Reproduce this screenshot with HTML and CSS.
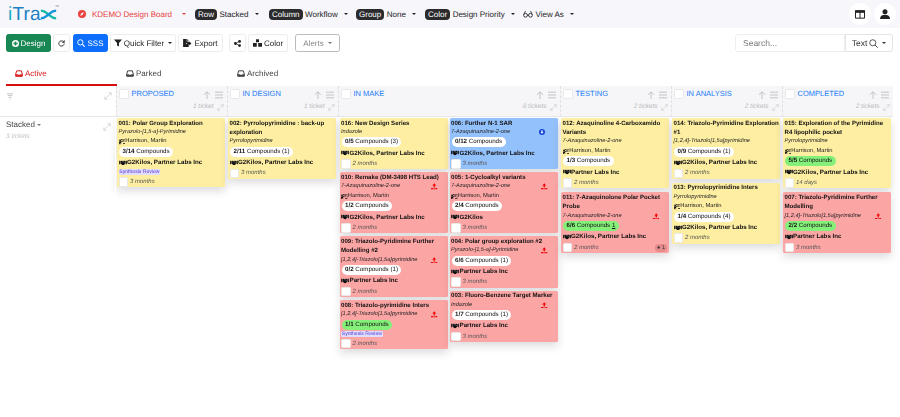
FILE: index.html
```html
<!DOCTYPE html>
<html lang="en">
<head>
<meta charset="utf-8">
<title>iTrax Design Board</title>
<link rel="stylesheet" href="styles.css">
</head>
<body>
<svg class="defs" width="0" height="0" aria-hidden="true">
  <symbol id="board" viewBox="0 0 12 10"><path fill="currentColor" d="M3.500 0H12v8.500H7.500v-1H11V1H4.500v1h-1zM2 1a1.600 1.600 0 1 1 0 3.200A1.600 1.600 0 0 1 2 1zM0 5.500c0-.6.4-1 1-1h2.500l2-1.200.6.9-2.100 1.600V10H3V7.500H2V10H.5zM6 2.500h4v1H6zM6 4.500h4v1H6z"/></symbol>
  <symbol id="hands" viewBox="0 0 14 10"><path fill="currentColor" d="M0 1.500h1.800v6H0zM12.200 1.500H14v6h-1.800zM2.400 2 5 1.200 7 1.900 9 1.200 11.600 2v4.500L8 9.500H6.200L2.400 6.500z"/><path fill="none" stroke="#fff" stroke-opacity=".6" stroke-width=".8" d="M4.500 4 7 2.500l4 3.500"/></symbol>
  <symbol id="up" viewBox="0 0 10 10"><path fill="currentColor" d="M5 .5 8 4H6v3H4V4H2zM0 7.500h3V8.500h4V7.500h3V10H0z"/></symbol>
  <symbol id="tray" viewBox="0 0 12 10"><path fill="none" stroke="currentColor" stroke-width="1.500" d="M1 6 2.500 1h7L11 6v3H1z"/><path fill="currentColor" d="M1 6h3l1 1h2l1-1h3v3.500H1z"/></symbol>
  <symbol id="expand" viewBox="0 0 10 10"><path fill="none" stroke="currentColor" stroke-width=".9" d="M1 9 9 1M5.500 1H9v3.500M1 5.500V9h3.500"/></symbol>
  <symbol id="arrow" viewBox="0 0 10 10"><path fill="none" stroke="currentColor" stroke-width="1.100" d="M5 10V1M1.200 4.800 5 1l3.800 3.800"/></symbol>
  <symbol id="menu" viewBox="0 0 10 10"><path fill="none" stroke="currentColor" stroke-width="1.100" d="M0 1.500h10M0 5h10M0 8.500h10"/></symbol>
</svg>

<header class="topbar">
  <div class="logo"><span class="logo-text"><span class="logo-i">i</span>Tra</span><svg class="logo-x" viewBox="0 0 20 14" width="17" height="13"><path fill="none" stroke="#16b8a6" stroke-width="2.800" d="M1 2.500c5 0 7 3 9 4.500 2 1.500 4 4.500 9 4.500"/><path fill="none" stroke="#1593d8" stroke-width="2.800" d="M1 11.500c5 0 7-3 9-4.500 2-1.500 4-4.500 9-4.500"/></svg><span class="logo-tm">&#8482;</span></div>
  <nav class="menu">
    <span class="mi board-name"><svg class="compass" viewBox="0 0 10 10" width="8" height="8"><circle cx="5" cy="5" r="5" fill="#e8413e"/><path fill="#fff" d="M7.500 2.500 5.800 5.800 2.500 7.500 4.200 4.200z"/></svg>KDEMO Design Board<i class="caret"></i></span>
    <span class="mi mi-row"><b class="pill">Row</b>Stacked<i class="caret"></i></span>
    <span class="mi mi-col"><b class="pill">Column</b>Workflow<i class="caret"></i></span>
    <span class="mi mi-grp"><b class="pill">Group</b>None<i class="caret"></i></span>
    <span class="mi mi-clr"><b class="pill">Color</b>Design Priority<i class="caret"></i></span>
    <span class="mi mi-view"><svg viewBox="0 0 12 9" width="10" height="8"><path fill="none" stroke="#222" stroke-width="1" d="M3 1 1 5M9 1l2 4M5 6h2"/><circle cx="3" cy="6" r="2.300" fill="none" stroke="#222"/><circle cx="9" cy="6" r="2.300" fill="none" stroke="#222"/></svg>View As<i class="caret"></i></span>
  </nav>
  <div class="round-group">
    <span class="round"><svg viewBox="0 0 12 10" width="10" height="9"><path fill="none" stroke="#222" stroke-width="1.200" d="M.6.600h10.800v8.800H.6zM6 .6v8.800"/><path fill="#222" d="M0 0h12v3H0z"/></svg></span>
    <span class="round"><svg viewBox="0 0 12 12" width="10" height="10"><circle cx="6" cy="3.200" r="3" fill="#222"/><path fill="#222" d="M0 12c0-3.500 2.500-5 6-5s6 1.500 6 5z"/></svg></span>
  </div>
</header>

<section class="toolbar">
  <button class="btn btn-green"><svg viewBox="0 0 10 10" width="7" height="7"><circle cx="5" cy="5" r="5" fill="#fff"/><path fill="#198754" d="M4 2h2v2h2v2H6v2H4V6H2V4h2z"/></svg>Design</button>
  <button class="btn btn-refresh"><svg viewBox="0 0 10 10" width="7" height="7"><path fill="none" stroke="#222" stroke-width="1.200" d="M8.800 5a3.800 3.800 0 1 1-1.200-2.800"/><path fill="#222" d="M9.500 0v4h-4z"/></svg></button>
  <button class="btn btn-blue"><svg viewBox="0 0 10 10" width="8" height="8"><circle cx="4.200" cy="4.200" r="3.300" fill="none" stroke="#fff" stroke-width="1.200"/><path stroke="#fff" stroke-width="1.300" d="m6.700 6.700 3 3"/></svg>SSS</button>
  <button class="btn btn-qf"><svg viewBox="0 0 10 10" width="8" height="8"><path fill="#222" d="M0 .5h10L6.200 5v4.500L3.800 8V5z"/></svg>Quick Filter<i class="caret small"></i></button>
  <button class="btn btn-exp"><svg viewBox="0 0 11 10" width="9" height="8"><path fill="#222" d="M0 0h4.500v3H7v2H3.500v1H7v4H0zM5 0l2 2.200H5zM7.500 4V2.800L10.500 5.500 7.500 8.200V6.500H5V4z"/></svg>Export</button>
  <button class="btn btn-share"><svg viewBox="0 0 10 10" width="7" height="7"><circle cx="2" cy="5" r="2" fill="#222"/><circle cx="8" cy="2" r="2" fill="#222"/><circle cx="8" cy="8" r="2" fill="#222"/><path stroke="#222" d="M2 5l6-3M2 5l6 3"/></svg></button>
  <button class="btn btn-color"><svg viewBox="0 0 12 10" width="9" height="8"><path fill="#222" d="M4 0h4v4H4zM0 5h5v5H0zM7 5h5v5H7z"/></svg>Color</button>
  <button class="btn btn-alerts">Alerts<i class="caret small grey"></i></button>
  <div class="searchbox">
    <span class="search-input">Search...</span>
    <span class="search-type">Text<svg viewBox="0 0 10 10" width="9" height="9"><circle cx="4.200" cy="4.200" r="3.400" fill="none" stroke="#333" stroke-width=".9"/><path stroke="#333" stroke-width="1" d="m6.700 6.700 3 3"/></svg><i class="caret small"></i></span>
  </div>
</section>

<nav class="tabs">
  <span class="tab active"><svg class="tab-ico"><use href="#tray"/></svg>Active</span>
  <span class="tab"><svg class="tab-ico"><use href="#tray"/></svg>Parked</span>
  <span class="tab"><svg class="tab-ico"><use href="#tray"/></svg>Archived</span>
</nav>

<main class="board">
  <div class="corner">
    <svg class="sort-ico" viewBox="0 0 8 8" width="7" height="7"><path stroke="#bbb" d="M0 1h7M1 3h5M2 5h3M3 7h1"/></svg>
    <svg class="exp-ico big"><use href="#expand"/></svg>
  </div>
  <div class="col-head"><i class="box"></i><span class="col-title">PROPOSED</span><span class="col-tools"><svg class="tool"><use href="#arrow"/></svg><svg class="tool"><use href="#menu"/></svg></span><span class="col-count">1 ticket<svg class="exp-ico"><use href="#expand"/></svg></span></div>
  <div class="col-head"><i class="box"></i><span class="col-title">IN DESIGN</span><span class="col-tools"><svg class="tool"><use href="#arrow"/></svg><svg class="tool"><use href="#menu"/></svg></span><span class="col-count">1 ticket<svg class="exp-ico"><use href="#expand"/></svg></span></div>
  <div class="col-head"><i class="box"></i><span class="col-title">IN MAKE</span><span class="col-tools"><svg class="tool"><use href="#arrow"/></svg><svg class="tool"><use href="#menu"/></svg></span><span class="col-count">8 tickets<svg class="exp-ico"><use href="#expand"/></svg></span></div>
  <div class="col-head"><i class="box"></i><span class="col-title">TESTING</span><span class="col-tools"><svg class="tool"><use href="#arrow"/></svg><svg class="tool"><use href="#menu"/></svg></span><span class="col-count">2 tickets<svg class="exp-ico"><use href="#expand"/></svg></span></div>
  <div class="col-head"><i class="box"></i><span class="col-title">IN ANALYSIS</span><span class="col-tools"><svg class="tool"><use href="#arrow"/></svg><svg class="tool"><use href="#menu"/></svg></span><span class="col-count">2 tickets<svg class="exp-ico"><use href="#expand"/></svg></span></div>
  <div class="col-head"><i class="box"></i><span class="col-title">COMPLETED</span><span class="col-tools"><svg class="tool"><use href="#arrow"/></svg><svg class="tool"><use href="#menu"/></svg></span><span class="col-count">2 tickets<svg class="exp-ico"><use href="#expand"/></svg></span></div>

  <div class="row-head">
    <span class="row-name">Stacked<i class="caret small grey"></i></span>
    <span class="row-count">3 tickets</span>
    <svg class="exp-ico big"><use href="#expand"/></svg>
  </div>

  <div class="lane">
    <article class="card yellow">
      <h3>001: Polar Group Exploration</h3>
      <p class="chem">Pyrazolo-[1,5-a]-Pyrimidine</p>
      <p class="owner"><svg class="ic"><use href="#board"/></svg>Harrison, Martin</p>
      <p class="cmp"><span class="cpill">3/14 <em>Compounds</em></span></p>
      <p class="org"><svg class="ic hs"><use href="#hands"/></svg>G2Kilos, Partner Labs Inc</p>
      <p class="tagline"><span class="tag">Synthesis Review</span></p>
      <p class="foot"><i class="box sm"></i>3 months</p>
    </article>
  </div>

  <div class="lane">
    <article class="card yellow">
      <h3>002: Pyrrolopyrimidine : back-up exploration</h3>
      <p class="chem">Pyrrolopyrimidine</p>
      <p class="cmp"><span class="cpill">2/11 <em>Compounds (1)</em></span></p>
      <p class="org"><svg class="ic hs"><use href="#hands"/></svg>G2Kilos, Partner Labs Inc</p>
      <p class="foot"><i class="box sm"></i>3 months</p>
    </article>
  </div>

  <div class="lane double">
    <div class="sub">
      <article class="card yellow">
        <h3>016: New Design Series</h3>
        <p class="chem">Indazole</p>
        <p class="cmp"><span class="cpill">0/5 <em>Compounds (3)</em></span></p>
        <p class="org"><svg class="ic hs"><use href="#hands"/></svg>G2Kilos, Partner Labs Inc</p>
        <p class="foot"><i class="box sm"></i>2 months</p>
      </article>
      <article class="card red">
        <h3>010: Remake (DM-3498 HTS Lead)</h3>
        <p class="chem">7-Azaquinazoline-2-one<svg class="flag"><use href="#up"/></svg></p>
        <p class="owner"><svg class="ic"><use href="#board"/></svg>Harrison, Martin</p>
        <p class="cmp"><span class="cpill">1/2 <em>Compounds</em></span></p>
        <p class="org"><svg class="ic hs"><use href="#hands"/></svg>G2Kilos, Partner Labs Inc</p>
        <p class="foot"><i class="box sm"></i>2 months</p>
      </article>
      <article class="card red">
        <h3>009: Triazolo-Pyridimine Further Modelling #2</h3>
        <p class="chem">[1,2,4]-Triazolo[1,5a]pyrimidine<svg class="flag"><use href="#up"/></svg></p>
        <p class="cmp"><span class="cpill">0/2 <em>Compounds (1)</em></span></p>
        <p class="org"><svg class="ic hs"><use href="#hands"/></svg>Partner Labs Inc</p>
        <p class="foot"><i class="box sm"></i>2 months</p>
      </article>
      <article class="card red">
        <h3>008: Triazolo-pyrimidine Inters</h3>
        <p class="chem">[1,2,4]-Triazolo[1,5a]pyrimidine<svg class="flag"><use href="#up"/></svg></p>
        <p class="cmp"><span class="cpill green">1/1 <em>Compounds</em></span></p>
        <p class="tagline"><span class="tag">Synthesis Review</span></p>
        <p class="foot"><i class="box sm"></i>2 months</p>
      </article>
    </div>
    <div class="sub">
      <article class="card blue">
        <h3>006: Further N-1 SAR</h3>
        <p class="chem">7-Azaquinazoline-2-one<svg class="flag info" viewBox="0 0 10 10"><circle cx="5" cy="5" r="5" fill="#1346d8"/><path fill="#fff" d="M4 2h2v3h1.500L5 8 2.500 5H4z"/></svg></p>
        <p class="cmp"><span class="cpill">0/12 <em>Compounds</em></span></p>
        <p class="org"><svg class="ic hs"><use href="#hands"/></svg>G2Kilos, Partner Labs Inc</p>
        <p class="foot"><i class="box sm"></i>3 months</p>
      </article>
      <article class="card red">
        <h3>005: 1-Cycloalkyl variants</h3>
        <p class="chem">7-Azaquinazoline-2-one<svg class="flag"><use href="#up"/></svg></p>
        <p class="owner"><svg class="ic"><use href="#board"/></svg>Harrison, Martin</p>
        <p class="cmp"><span class="cpill">2/4 <em>Compounds</em></span></p>
        <p class="org"><svg class="ic hs"><use href="#hands"/></svg>G2Kilos</p>
        <p class="foot"><i class="box sm"></i>3 months</p>
      </article>
      <article class="card red">
        <h3>004: Polar group exploration #2</h3>
        <p class="chem">Pyrazolo-[1,5-a]-Pyrimidine<svg class="flag"><use href="#up"/></svg></p>
        <p class="cmp"><span class="cpill">6/6 <em>Compounds (1)</em></span></p>
        <p class="org"><svg class="ic hs"><use href="#hands"/></svg>Partner Labs Inc</p>
        <p class="foot"><i class="box sm"></i>3 months</p>
      </article>
      <article class="card red">
        <h3>003: Fluoro-Benzene Target Marker</h3>
        <p class="chem">Indazole<svg class="flag"><use href="#up"/></svg></p>
        <p class="cmp"><span class="cpill">1/7 <em>Compounds (1)</em></span></p>
        <p class="org"><svg class="ic hs"><use href="#hands"/></svg>Partner Labs Inc</p>
        <p class="foot"><i class="box sm"></i>3 months</p>
      </article>
    </div>
  </div>

  <div class="lane">
    <article class="card yellow">
      <h3>012: Azaquinoline 4-Carboxamido Variants</h3>
      <p class="chem">7-Azaquinazoline-2-one</p>
      <p class="owner"><svg class="ic"><use href="#board"/></svg>Harrison, Martin</p>
      <p class="cmp"><span class="cpill">1/3 <em>Compounds</em></span></p>
      <p class="org"><svg class="ic hs"><use href="#hands"/></svg>Partner Labs Inc</p>
      <p class="foot"><i class="box sm"></i>2 months</p>
    </article>
    <article class="card red">
      <h3>011: 7-Azaquinolone Polar Pocket Probe</h3>
      <p class="chem">7-Azaquinazoline-2-one<svg class="flag"><use href="#up"/></svg></p>
      <p class="cmp"><span class="cpill green">6/6 <em>Compounds <u>1</u></em></span></p>
      <p class="org"><svg class="ic hs"><use href="#hands"/></svg>G2Kilos, Partner Labs Inc</p>
      <p class="foot"><i class="box sm"></i>2 months<span class="badge">&#9679; 1</span></p>
    </article>
  </div>

  <div class="lane">
    <article class="card yellow">
      <h3>014: Triazolo-Pyrimidine Exploration #1</h3>
      <p class="chem">[1,2,4]-Triazolo[1,5a]pyrimidine</p>
      <p class="cmp"><span class="cpill">0/9 <em>Compounds (1)</em></span></p>
      <p class="org"><svg class="ic hs"><use href="#hands"/></svg>G2Kilos, Partner Labs Inc</p>
      <p class="foot"><i class="box sm"></i>2 months</p>
    </article>
    <article class="card yellow">
      <h3>013: Pyrrolopyrimidine Inters</h3>
      <p class="chem">Pyrrolopyrimidine</p>
      <p class="owner"><svg class="ic"><use href="#board"/></svg>Harrison, Martin</p>
      <p class="cmp"><span class="cpill">1/4 <em>Compounds (4)</em></span></p>
      <p class="org"><svg class="ic hs"><use href="#hands"/></svg>G2Kilos, Partner Labs Inc</p>
      <p class="foot"><i class="box sm"></i>2 months</p>
    </article>
  </div>

  <div class="lane">
    <article class="card yellow">
      <h3>015: Exploration of the Pyrimidine R4 lipophilic pocket</h3>
      <p class="chem">Pyrrolopyrimidine</p>
      <p class="owner"><svg class="ic"><use href="#board"/></svg>Harrison, Martin</p>
      <p class="cmp"><span class="cpill green">5/5 <em>Compounds</em></span></p>
      <p class="org"><svg class="ic hs"><use href="#hands"/></svg>G2Kilos, Partner Labs Inc</p>
      <p class="foot"><i class="box sm"></i>14 days</p>
    </article>
    <article class="card red">
      <h3>007: Triazolo-Pyridimine Further Modelling</h3>
      <p class="chem">[1,2,4]-Triazolo[1,5a]pyrimidine<svg class="flag"><use href="#up"/></svg></p>
      <p class="cmp"><span class="cpill green">2/2 <em>Compounds</em></span></p>
      <p class="org"><svg class="ic hs"><use href="#hands"/></svg>Partner Labs Inc</p>
      <p class="foot"><i class="box sm"></i>3 months</p>
    </article>
  </div>
</main>
</body>
</html>
```

FILE: styles.css
```css
* { box-sizing: border-box; }
html, body { margin: 0; padding: 0; }
body {
  width: 900px;
  height: 417px;
  overflow: hidden;
  background: #fff;
  color: #222;
  font-family: "Liberation Sans", Arial, sans-serif;
  font-size: 8px;
  text-rendering: geometricPrecision;
  filter: blur(.25px);
}
.defs { display: block; height: 0; }
i { font-style: normal; }
p, h3 { margin: 0; }

/* top bar */
.topbar {
  height: 28px;
  background: #f6f6fb;
  display: flex;
  align-items: center;
  padding: 0 4px 0 8px;
}
.logo { position: relative; width: 70px; display: flex; align-items: center; }
.logo-text { font-size: 19px; color: #1d7fc4; line-height: 1; letter-spacing: .2px; }
.logo-i { color: #17a9c4; }
.logo-x { margin-left: -1px; margin-top: 1px; }
.logo-tm { position: absolute; left: 47px; top: -1px; font-size: 4px; line-height: 5px; color: #667; }
.menu { display: flex; align-items: center; flex: 1; }
.mi { display: flex; align-items: center; gap: 2.500px; white-space: nowrap; }
.board-name { color: #e8413e; gap: 6px; width: 117px; }
.mi-row { width: 74px; }
.mi-col { width: 87px; }
.mi-grp { width: 69px; }
.mi-clr { width: 98px; }
.pill {
  background: #2b2b2e;
  color: #fff;
  font-weight: 400;
  height: 11px;
  line-height: 11px;
  padding: 0 3px;
  border-radius: 4px;
}
.caret {
  width: 0; height: 0;
  margin-left: 4px;
  border-left: 2.200px solid transparent;
  border-right: 2.200px solid transparent;
  border-top: 2.500px solid currentColor;
}
.caret.small { margin-left: 2px; border-left-width: 2px; border-right-width: 2px; border-top-width: 2.200px; }
.caret.grey { color: #777; }
.round-group { display: flex; gap: 3px; }
.round {
  width: 22px; height: 22px;
  border-radius: 50%;
  background: #fff;
  display: flex; align-items: center; justify-content: center;
}

/* toolbar */
.toolbar {
  display: flex;
  align-items: flex-start;
  padding: 6px 7px 0 6px;
  height: 35px;
}
.btn {
  height: 18px;
  padding: 0;
  border: 1px solid #ececec;
  border-radius: 2.500px;
  background: #fff;
  color: #222;
  font: 8px "Liberation Sans", Arial, sans-serif;
  text-rendering: geometricPrecision;
  display: flex; align-items: center; justify-content: center; gap: 2px;
  margin-right: 2px;
}
.btn-green { background: #198754; border-color: #198754; color: #fff; width: 45px; }
.btn-refresh { width: 17px; }
.btn-blue { background: #0d6efd; border-color: #0d6efd; color: #fff; width: 35px; margin-left: 1px; }
.btn-qf { width: 66px; }
.btn-exp { width: 45px; margin-right: 6px; }
.btn-share { width: 17px; }
.btn-color { width: 40px; margin-right: 7px; }
.btn-alerts { width: 45px; color: #888; border-color: #bbb; }
.searchbox { margin-left: auto; display: flex; height: 18px; }
.search-input {
  width: 110px;
  border: 1px solid #eee;
  border-radius: 3px 0 0 3px;
  padding-left: 7px;
  color: #777;
  font-size: 8.500px;
  line-height: 16px;
}
.search-type {
  width: 48px;
  border: 1px solid #e4e4e4;
  border-left-width: 1px;
  border-radius: 0 3px 3px 0;
  display: flex; align-items: center; justify-content: center; gap: 2px;
  font-size: 8.500px;
  color: #333;
}

/* tabs */
.tabs { display: flex; height: 23px; padding-left: 6px; }
.tab {
  width: 111px;
  height: 23px;
  padding: 0 0 0 9px;
  border-bottom: 2px solid transparent;
  display: flex; align-items: center; gap: 2px;
  color: #444;
  font-size: 8px;
}
.tab.active { color: #d91c1c; border-bottom-color: #d40d0d; }
.tab-ico { width: 8px; height: 7px; }

/* board */
.board {
  display: grid;
  grid-template-columns: 115.500px 111px 111px 222px 111px 111px 111px;
  grid-template-rows: 31px auto;
}
.corner, .row-head { position: relative; }
.corner { border-bottom: 1px solid #e8e8e8; }
.sort-ico { position: absolute; left: 7px; top: 7px; }
.exp-ico { width: 7px; height: 7px; color: #ccc; margin-left: 3px; }
.exp-ico.big { position: absolute; right: 4px; top: 6px; width: 8px; height: 8px; margin: 0; }
.col-head {
  position: relative;
  background: #f6f6f9;
  border-left: 1px dashed #e0e0e0;
  border-bottom: 1px solid #e8e8e8;
}
.box {
  display: inline-block;
  width: 10px; height: 10px;
  background: #fff;
  border: .500px solid #e8e8e8;
  border-radius: 1.500px;
  flex: none;
}
.col-head > .box { position: absolute; left: 2.500px; top: 3px; }
.col-title {
  position: absolute; left: 15px; top: 3px;
  color: #1a7cf5;
  font-size: 7.500px;
  line-height: 10px;
}
.col-tools { position: absolute; right: 3.500px; top: 5px; display: flex; gap: 4.500px; }
.tool { width: 8px; height: 8px; color: #bdbdbd; }
.col-count {
  position: absolute; right: 3px; top: 17px;
  display: flex; align-items: center;
  font-size: 6.500px; line-height: 8px;
  font-style: italic;
  color: #bbb;
}
.row-head { padding: 2px 0 0 6px; border-right: 1px solid #fff; }
.row-name { display: block; line-height: 11px; color: #444; font-size: 8px; }
.row-name .caret { display: inline-block; vertical-align: middle; }
.row-count { display: block; margin-top: 2px; font-size: 6.500px; line-height: 9px; font-style: italic; color: #c4c4c4; }

/* lanes */
.lane {
  padding: 1px 1.500px 0;
  display: flex; flex-direction: column; gap: 4px;
  min-width: 0;
}
.double { flex-direction: row; gap: 2px; padding-left: 2px; }
.sub { width: 108px; display: flex; flex-direction: column; gap: 3px; }

/* cards */
.card {
  width: 108px;
  padding: .500px 1px .500px 1.500px;
  border-radius: 1.500px;
  box-shadow: 0 4px 8px rgba(60, 60, 70, .18);
  color: #111;
}
.yellow { background: #fdeea2; }
.red { background: #fca5a5; }
.blue { background: #93c1fb; }
.card h3 { font-size: 6.100px; font-weight: 700; line-height: 9.400px; }
.chem {
  position: relative;
  font-size: 5.600px;
  font-style: italic;
  line-height: 9.500px;
  color: #222;
}
.flag { position: absolute; right: 9px; top: 1px; width: 6.500px; height: 6.500px; color: #ee0808; }
.flag.info { right: 12px; width: 6px; height: 6px; }
.owner { display: flex; align-items: center; font-size: 5.800px; line-height: 9.500px; color: #222; }
.ic { width: 6.500px; height: 5.500px; color: #111; margin-right: .300px; flex: none; }
.ic.hs { width: 8px; margin-right: .500px; }
.cmp { height: 10px; display: flex; padding-left: .500px; }
.cpill {
  display: inline-block;
  height: 10px;
  line-height: 10px;
  padding: 0 3.500px;
  background: #fff;
  border-radius: 5px;
  font-size: 6.200px;
  font-weight: 700;
}
.cpill em { font-style: normal; font-weight: 400; }
.cpill.green { background: #84f07a; }
.org { display: flex; align-items: center; height: 10.500px; margin-top: .500px; font-size: 6.200px; font-weight: 700; }
.tagline { height: 8.500px; display: flex; align-items: center; }
.tag {
  background: #e2dcfd;
  color: #4a3bd4;
  font-size: 5.100px;
  line-height: 6.500px;
  padding: 0 .800px;
  border-radius: 1px;
}
.foot {
  position: relative;
  display: flex; align-items: center; gap: 2px;
  height: 10px;
  margin-top: .500px;
  font-size: 6px;
  font-style: italic;
  color: #555;
}
.box.sm { width: 9.500px; height: 9.500px; }
.badge {
  position: absolute; right: 1px; top: 1px;
  background: #e48a8a;
  border-radius: 4px;
  padding: 0 2px;
  font-size: 5.500px;
  line-height: 8px;
  font-style: normal;
  color: #333;
}
```
